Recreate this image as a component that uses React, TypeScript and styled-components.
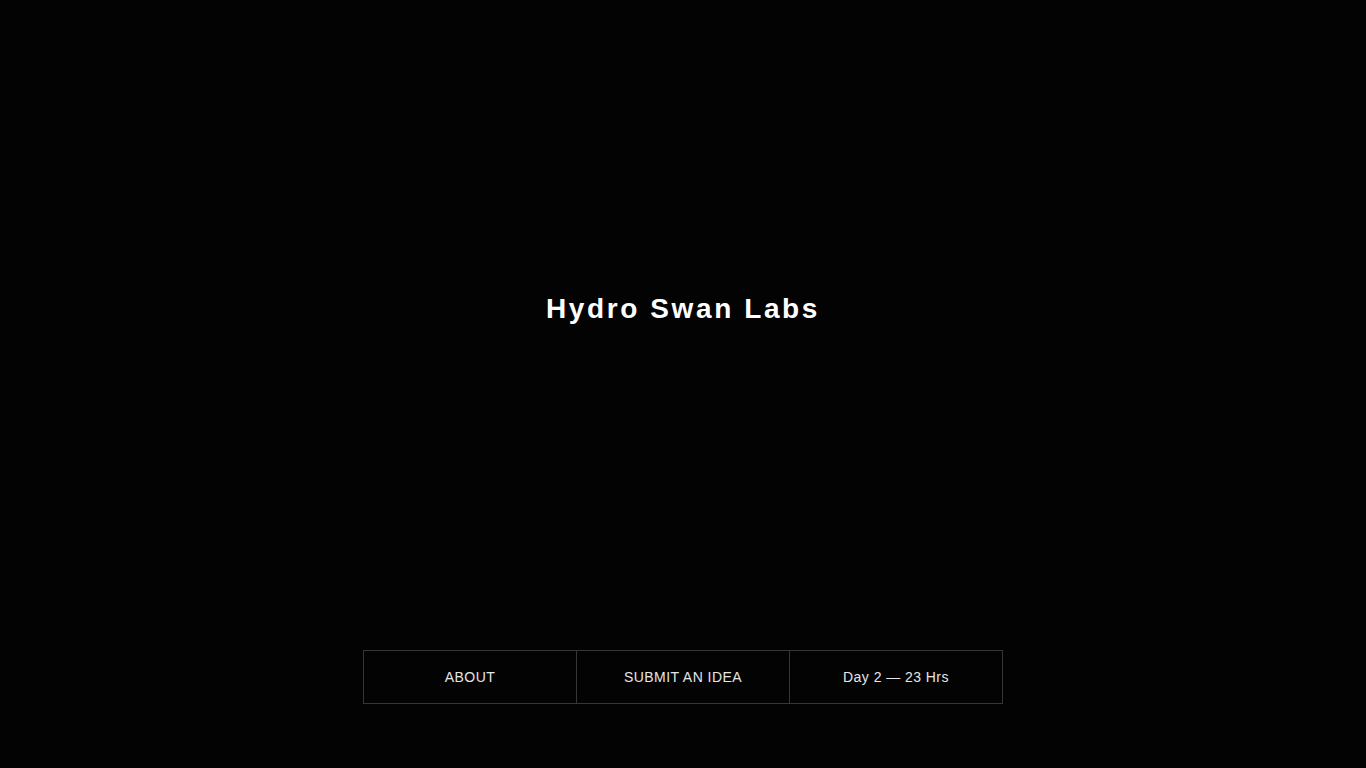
import { createGlobalStyle } from 'styled-components';
import styled from 'styled-components';

const GlobalStyle = createGlobalStyle`
	html,
	body {
		margin: 0;
		padding: 0;
		background: #030303;
	}

	body {
		font-family: 'Liberation Sans', Arial, sans-serif;
		color: #e6e6e6;
	}
`;

const Page = styled.div`
	min-height: 100vh;
	display: flex;
	flex-direction: column;
	align-items: center;
	box-sizing: border-box;
	padding-bottom: 64px;
`;

const Hero = styled.main`
	flex: 1;
	display: flex;
	align-items: center;
	justify-content: center;
	padding-bottom: 32px;
`;

const Title = styled.h1`
	margin: 0;
	font-size: 28px;
	font-weight: 700;
	letter-spacing: 2.6px;
	color: #ffffff;
`;

// the 1px gap over a grey background draws the cell dividers
const Nav = styled.nav`
	height: 54px;
	box-sizing: border-box;
	display: grid;
	grid-template-columns: repeat(3, 212px);
	gap: 1px;
	padding: 1px;
	background: #363636;
`;

const NavItem = styled.a<{ $upper?: boolean }>`
	display: flex;
	align-items: center;
	justify-content: center;
	background: #030303;
	font-size: 14px;
	letter-spacing: 0.45px;
	color: #e6e6e6;
	text-decoration: none;
	text-transform: ${({ $upper }) => ($upper ? 'uppercase' : 'none')};
	cursor: pointer;
`;

const App = () => (
	<>
		<GlobalStyle />
		<Page>
			<Hero>
				<Title>Hydro Swan Labs</Title>
			</Hero>
			<Nav>
				<NavItem $upper>About</NavItem>
				<NavItem $upper>Submit an idea</NavItem>
				<NavItem>Day 2 — 23 Hrs</NavItem>
			</Nav>
		</Page>
	</>
);

export default App;
